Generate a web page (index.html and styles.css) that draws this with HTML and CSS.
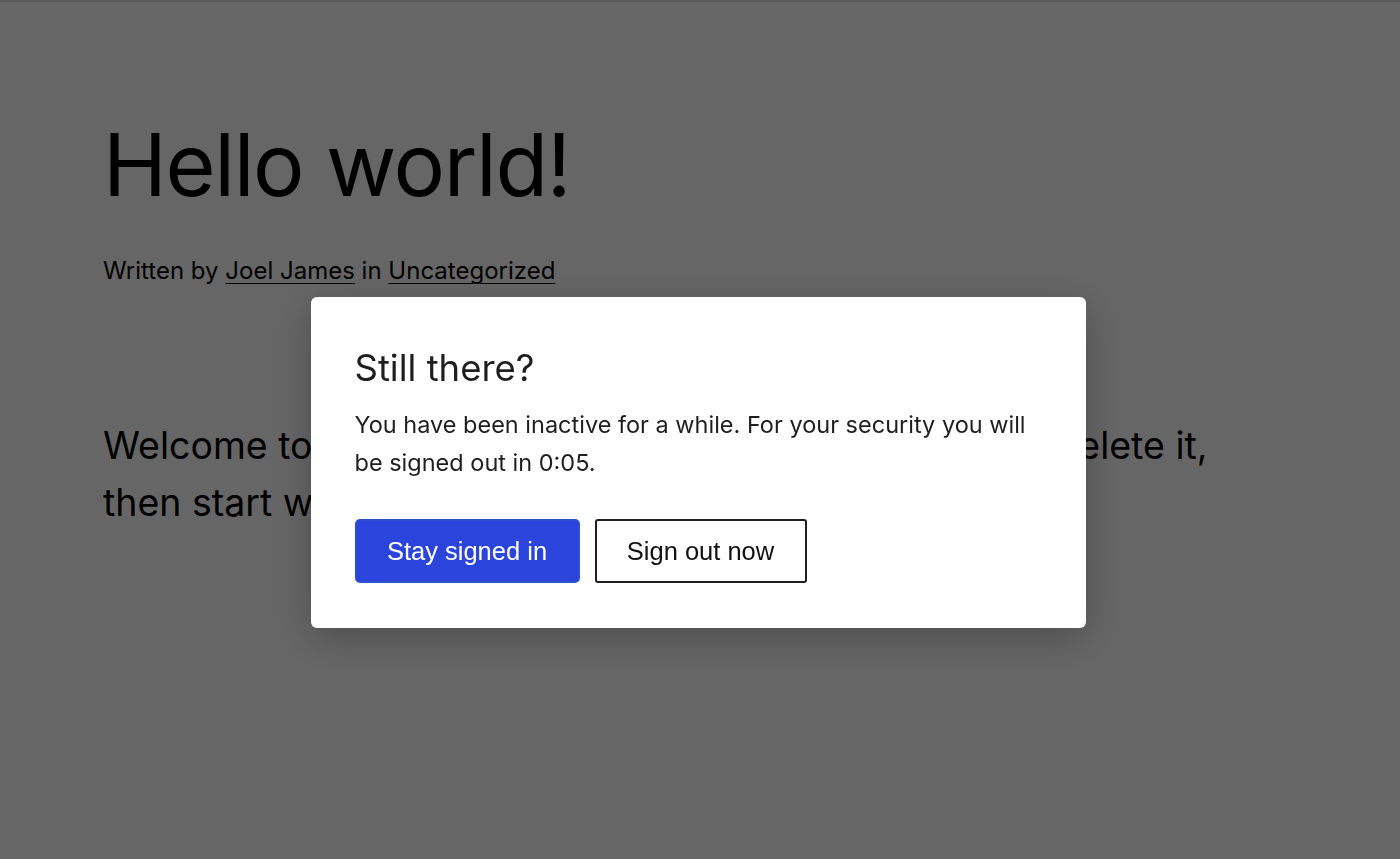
FILE: index.html
```html
<!DOCTYPE html>
<html lang="en">
<head>
<meta charset="utf-8">
<title>Hello world!</title>
<link rel="stylesheet" href="styles.css">
</head>
<body>
<main class="page">
  <h1 class="post-title">Hello world!</h1>
  <p class="post-meta">Written by <a href="#">Joel James</a> in <a href="#">Uncategorized</a></p>
  <p class="post-content">Welcome to WordPress. This is your first post. Edit or delete it, then start writing!</p>
</main>
<div class="overlay">
  <div class="modal" role="dialog" aria-labelledby="modal-title">
    <h2 class="modal-title" id="modal-title">Still there?</h2>
    <p class="modal-text">You have been inactive for a while. For your security you will be signed out in 0:05.</p>
    <div class="modal-actions">
      <button class="btn btn-primary">Stay signed in</button>
      <button class="btn btn-secondary">Sign out now</button>
    </div>
  </div>
</div>
</body>
</html>
```
FILE: styles.css
```css
html, body {
  margin: 0;
  padding: 0;
  background: #ffffff;
}
body {
  font-family: Inter, "Noto Sans", sans-serif;
  color: #000;
  border-top: 2px solid #dedede;
}
.page {
  padding: 112px 103px 0;
}
.post-title {
  margin: 0;
  font-size: 86px;
  font-weight: 400;
  line-height: 1.2;
  letter-spacing: -1.4px;
}
.post-meta {
  margin: 37px 0 0;
  font-size: 24px;
  line-height: 1.4;
}
.post-meta a {
  color: #000;
  text-decoration: underline;
  text-underline-offset: 4px;
  text-decoration-thickness: 1px;
}
.post-content {
  margin: 129px 0 0;
  font-size: 37.5px;
  line-height: 57px;
  max-width: 1150px;
}
.overlay {
  position: fixed;
  inset: 0;
  background: rgba(0, 0, 0, 0.6);
  display: flex;
  justify-content: center;
  align-items: flex-start;
  padding-top: 297px;
  box-sizing: border-box;
}
.modal {
  width: 775px;
  box-sizing: border-box;
  background: #fff;
  border-radius: 6px;
  padding: 48px 44px 45px;
  box-shadow: 0 10px 40px rgba(0, 0, 0, 0.25);
  margin-left: -4px;
}
.modal-title {
  margin: 0;
  font-size: 36.5px;
  font-weight: 400;
  line-height: 1.3;
  color: #1e1e1e;
}
.modal-text {
  margin: 14px 0 0;
  font-size: 23.5px;
  line-height: 38px;
  color: #1e1e1e;
}
.modal-actions {
  display: flex;
  gap: 15px;
  margin-top: 37px;
}
.btn {
  font-family: "Liberation Sans", Arial, sans-serif;
  font-size: 25.5px;
  height: 64px;
  padding: 0 20px;
  cursor: pointer;
  box-sizing: border-box;
}
.btn-primary {
  background: #2a44dc;
  color: #fff;
  border: 2px solid #2d4fd0;
  border-radius: 5px;
  width: 225px;
}
.btn-secondary {
  background: #fff;
  color: #111;
  border: 2px solid #1e1e1e;
  border-radius: 3px;
  width: 212px;
}
```
